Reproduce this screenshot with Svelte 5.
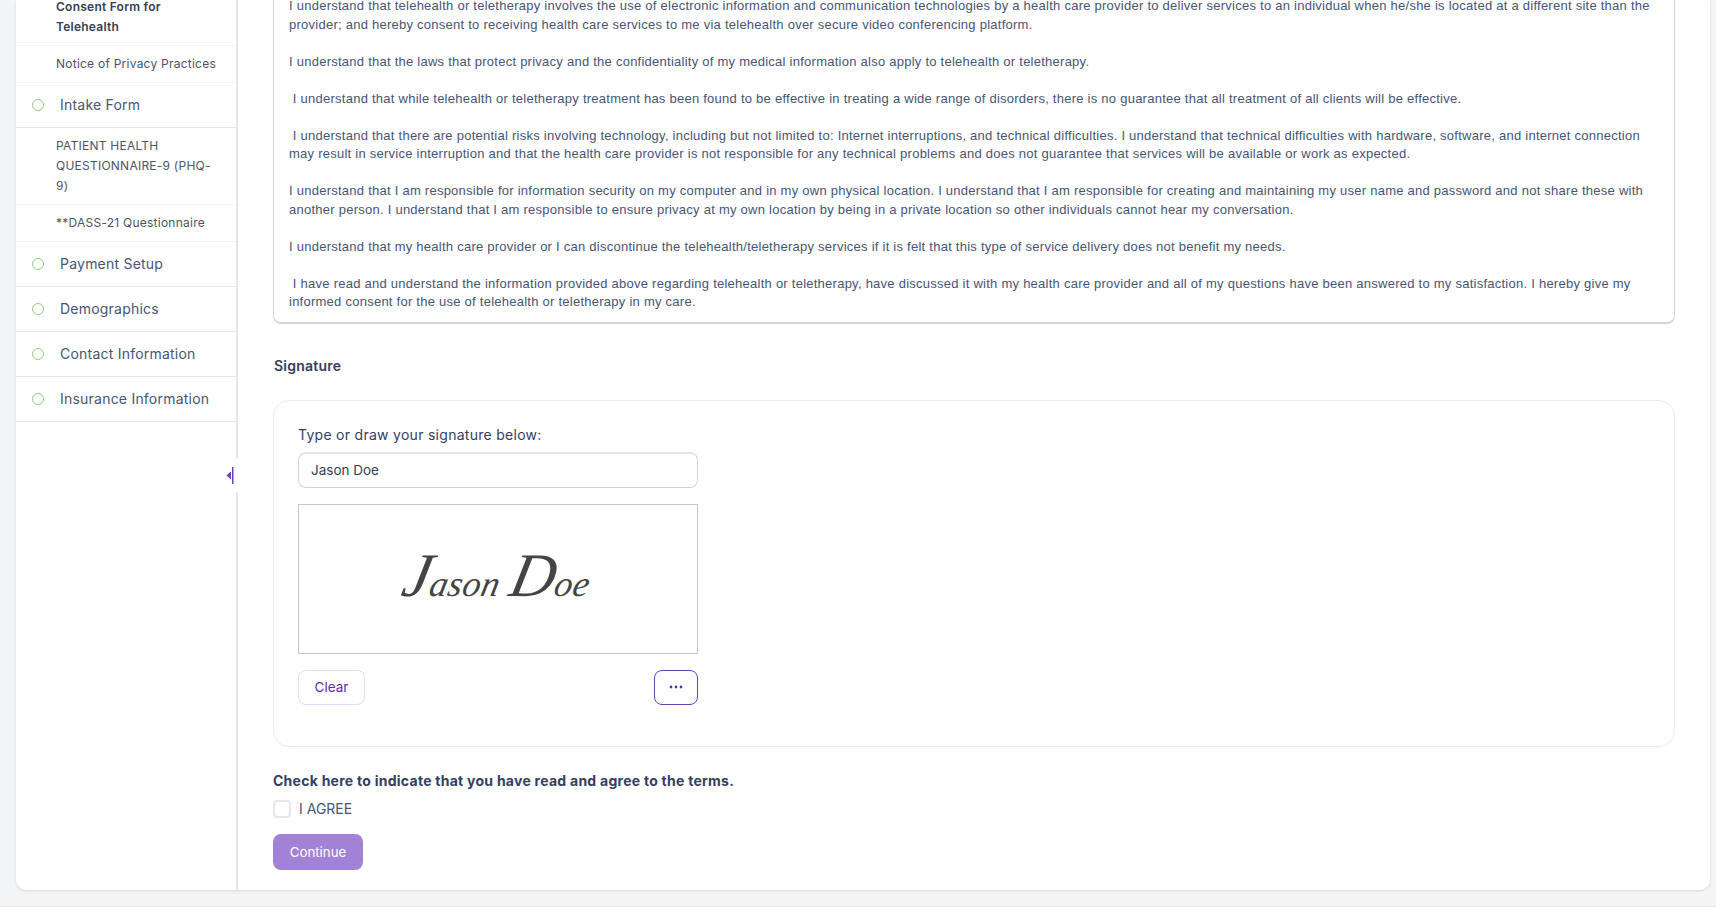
<script lang="ts">
  const STEPS = [
    { label: 'Consent Form for Telehealth', sub: true, active: true },
    { label: 'Notice of Privacy Practices', sub: true },
    { label: 'Intake Form' },
    { label: 'PATIENT HEALTH QUESTIONNAIRE-9 (PHQ-9)', sub: true },
    { label: '**DASS-21 Questionnaire', sub: true },
    { label: 'Payment Setup' },
    { label: 'Demographics' },
    { label: 'Contact Information' },
    { label: 'Insurance Information' },
  ]

  const PARAGRAPHS = [
    'I understand that telehealth or teletherapy involves the use of electronic information and communication technologies by a health care provider to deliver services to an individual when he/she is located at a different site than the provider; and hereby consent to receiving health care services to me via telehealth over secure video conferencing platform.',
    'I understand that the laws that protect privacy and the confidentiality of my medical information also apply to telehealth or teletherapy.',
    '\u00a0I understand that while telehealth or teletherapy treatment has been found to be effective in treating a wide range of disorders, there is no guarantee that all treatment of all clients will be effective.',
    '\u00a0I understand that there are potential risks involving technology, including but not limited to: Internet interruptions, and technical difficulties. I understand that technical difficulties with hardware, software, and internet connection may result in service interruption and that the health care provider is not responsible for any technical problems and does not guarantee that services will be available or work as expected.',
    'I understand that I am responsible for information security on my computer and in my own physical location. I understand that I am responsible for creating and maintaining my user name and password and not share these with another person. I understand that I am responsible to ensure privacy at my own location by being in a private location so other individuals cannot hear my conversation.',
    'I understand that my health care provider or I can discontinue the telehealth/teletherapy services if it is felt that this type of service delivery does not benefit my needs.',
    '\u00a0I have read and understand the information provided above regarding telehealth or teletherapy, have discussed it with my health care provider and all of my questions have been answered to my satisfaction. I hereby give my informed consent for the use of telehealth or teletherapy in my care.',
  ]
</script>

<div class="page">
  <div class="shell">
    <aside class="sidebar">
      {#each STEPS as step}
        <div class="step" class:sub={step.sub} class:active={step.active}>
          {#if !step.sub}<span class="dot"></span>{/if}
          <span class="step-label">{step.label}</span>
        </div>
      {/each}
      <button class="collapse" aria-label="Collapse sidebar">
        <svg width="8" height="17" viewBox="0 0 8 17">
          <path d="M5 4.5 L0.5 8.5 L5 12.5 Z" fill="#6a3fc0" />
          <rect x="6" y="0" width="1.5" height="17" fill="#6a3fc0" />
        </svg>
      </button>
    </aside>

    <main class="main">
      <div class="terms">
        {#each PARAGRAPHS as p}
          <p>{p}</p>
        {/each}
      </div>

      <h3 class="sig-title">Signature</h3>

      <section class="sig-card">
        <div class="sig-inner">
          <label class="sig-label" for="sig">Type or draw your signature below:</label>
          <input id="sig" class="sig-input" value="Jason Doe" />
          <div class="sig-canvas">
            <span class="script"><b>J</b>ason <b>D</b>oe</span>
          </div>
          <div class="sig-actions">
            <button class="btn-clear">Clear</button>
            <button class="btn-more" aria-label="More">
              <svg width="14" height="4" viewBox="0 0 14 4">
                <circle cx="2" cy="2" r="1.4" fill="#5b2fa8" />
                <circle cx="7" cy="2" r="1.4" fill="#5b2fa8" />
                <circle cx="12" cy="2" r="1.4" fill="#5b2fa8" />
              </svg>
            </button>
          </div>
        </div>
      </section>

      <div class="agree-title">Check here to indicate that you have read and agree to the terms.</div>
      <label class="agree">
        <span class="box"></span>
        I AGREE
      </label>
      <button class="continue">Continue</button>
    </main>
  </div>
  <div class="footer"></div>
</div>

<style>
  :global(body) {
    margin: 0;
    background: #f3f4f6;
    font-family: Inter, "Liberation Sans", sans-serif;
    color: #344060;
  }

  .page {
    height: 908px;
    overflow: hidden;
    display: flex;
    flex-direction: column;
  }

  .shell {
    height: 890px;
    margin: 0 6px 0 16px;
    background: #fff;
    border-radius: 0 0 10px 10px;
    box-shadow: 0 1px 3px rgba(16, 24, 40, 0.12);
    display: flex;
    flex-shrink: 0;
  }

  .footer {
    margin-top: 16px;
    height: 2px;
    background: #fff;
    border-top: 1px solid #e4e7ec;
  }

  /* ── Sidebar ── */
  .sidebar {
    position: relative;
    width: 220px;
    flex-shrink: 0;
    border-right: 2px solid #e4e7ec;
    margin-top: -1px;
  }

  .step {
    display: flex;
    align-items: center;
    gap: 16px;
    height: 44px;
    padding-left: 16px;
    border-bottom: 1px solid #e4e7ec;
    font-size: 14px;
    letter-spacing: 0.22px;
    color: #475573;
  }

  .step-label {
    padding-bottom: 2px;
  }

  .dot {
    width: 12px;
    height: 12px;
    box-sizing: border-box;
    border: 1.5px solid #93cc7f;
    border-radius: 50%;
    flex-shrink: 0;
  }

  .step.sub {
    display: block;
    height: auto;
    padding: 8px 16px 8px 40px;
    font-size: 12px;
    letter-spacing: 0.24px;
    line-height: 20px;
    color: #4b5563;
    border-bottom-color: #f2f4f7;
  }

  .step.sub .step-label {
    padding-bottom: 0;
  }

  .step.active {
    font-weight: 600;
    color: #344054;
    margin-top: -10px;
  }

  .collapse {
    position: absolute;
    top: 460px;
    right: -2px;
    width: 14px;
    height: 33px;
    padding: 0 0 0 2px;
    border: none;
    background: #fff;
    display: flex;
    align-items: center;
    justify-content: flex-start;
  }

  /* ── Main ── */
  .main {
    flex: 1;
    padding-left: 35px;
    padding-right: 35px;
  }

  .terms {
    margin-top: -14px;
    padding: 10px 15px 10px 15px;
    border: 1px solid #d0d5dd;
    border-bottom-width: 2px;
    border-radius: 8px;
    font-family: "Liberation Sans", Arial, sans-serif;
    font-size: 13px;
    letter-spacing: 0.25px;
    line-height: 18.6px;
    color: #475573;
  }

  .terms p {
    margin: 0 0 18.4px;
  }

  .terms p:last-child {
    margin-bottom: 0;
  }

  .sig-title {
    margin: 32px 0 0 1px;
    font-size: 14px;
    letter-spacing: 0.24px;
    line-height: 20px;
    font-weight: 600;
    color: #344060;
  }

  .sig-card {
    margin-top: 24px;
    height: 347px;
    box-sizing: border-box;
    border: 1px solid #eaecf0;
    border-radius: 16px;
    padding: 24px 24px 0;
  }

  .sig-inner {
    width: 400px;
  }

  .sig-label {
    display: block;
    font-size: 14px;
    line-height: 20px;
    letter-spacing: 0.02em;
  }

  .sig-input {
    display: block;
    width: 100%;
    box-sizing: border-box;
    height: 36px;
    margin-top: 7px;
    padding: 0 12px;
    border: 1px solid #d0d5dd;
    border-top-width: 2px;
    border-top-color: #e2e4e8;
    border-radius: 8px;
    font-family: inherit;
    font-size: 13.5px;
    color: #344054;
    outline: none;
  }

  .sig-canvas {
    height: 150px;
    box-sizing: border-box;
    margin-top: 16px;
    border: 1px solid #c6c6c6;
    display: flex;
    align-items: center;
    justify-content: center;
  }

  .script {
    font-family: "Liberation Serif", serif;
    font-style: italic;
    font-size: 36px;
    color: #444;
    margin-top: -6px;
    letter-spacing: 0.5px;
    transform: skewX(-12deg);
  }

  .script b {
    font-weight: 400;
    font-size: 62px;
  }

  .sig-actions {
    display: flex;
    justify-content: space-between;
    margin-top: 16px;
  }

  .btn-clear {
    width: 67px;
    height: 35px;
    border: 1px solid #e4dcf7;
    border-radius: 8px;
    background: #fff;
    color: #5b2fa8;
    font-family: inherit;
    font-size: 13.5px;
  }

  .btn-more {
    width: 44px;
    height: 35px;
    border: 1px solid #6a3fb5;
    border-radius: 8px;
    background: #fff;
    display: flex;
    align-items: center;
    justify-content: center;
    padding: 0;
  }

  .agree-title {
    margin-top: 24px;
    font-size: 14px;
    line-height: 20px;
    font-weight: 700;
    letter-spacing: 0.26px;
    color: #344060;
  }

  .agree {
    display: flex;
    align-items: center;
    gap: 8px;
    margin-top: 9px;
    font-size: 14px;
    line-height: 18px;
    color: #475573;
  }

  .box {
    width: 18px;
    height: 18px;
    box-sizing: border-box;
    border: 2px solid #e4e7ec;
    border-radius: 4px;
    background: #fff;
  }

  .continue {
    display: block;
    margin-top: 16px;
    width: 90px;
    height: 36px;
    border: none;
    border-radius: 8px;
    background: #a282d6;
    color: #fff;
    font-family: inherit;
    font-size: 13.3px;
  }
</style>
